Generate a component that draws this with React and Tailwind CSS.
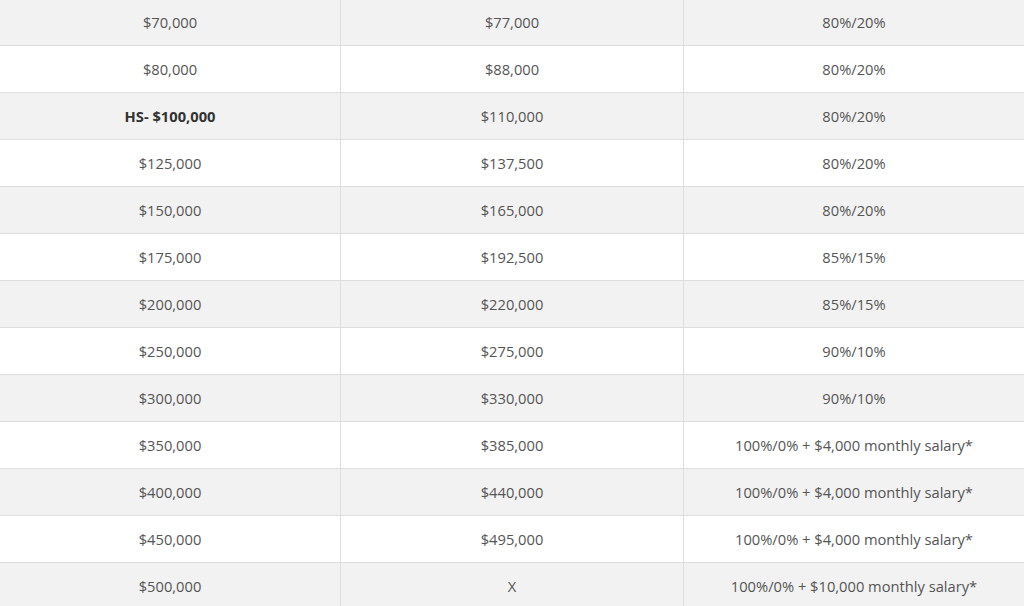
import React from 'react';

const rows = [
    ['$70,000', '$77,000', '80%/20%'],
    ['$80,000', '$88,000', '80%/20%'],
    ['HS- $100,000', '$110,000', '80%/20%', true],
    ['$125,000', '$137,500', '80%/20%'],
    ['$150,000', '$165,000', '80%/20%'],
    ['$175,000', '$192,500', '85%/15%'],
    ['$200,000', '$220,000', '85%/15%'],
    ['$250,000', '$275,000', '90%/10%'],
    ['$300,000', '$330,000', '90%/10%'],
    ['$350,000', '$385,000', '100%/0% + $4,000 monthly salary*'],
    ['$400,000', '$440,000', '100%/0% + $4,000 monthly salary*'],
    ['$450,000', '$495,000', '100%/0% + $4,000 monthly salary*'],
    ['$500,000', 'X', '100%/0% + $10,000 monthly salary*'],
];

const App = () => {
    return (
        <div className="w-[1024px] h-[606px] overflow-hidden bg-white text-[14.7px] text-[#555] font-['Open_Sans',sans-serif]">
            <div className="-mt-[1px]">
                {rows.map(([a, b, c, bold], i) => (
                    <div
                        key={i}
                        className={`grid grid-cols-[341px_343px_1fr] h-[47px] border-b border-[#dddddd] ${i % 2 === 0 ? 'bg-[#f2f2f2]' : 'bg-white'}`}
                    >
                        <div className={`flex items-center justify-center border-r border-[#dddddd] ${bold ? 'font-bold text-[#333]' : ''}`}>{a}</div>
                        <div className="flex items-center justify-center border-r border-[#dddddd]">{b}</div>
                        <div className="flex items-center justify-center">{c}</div>
                    </div>
                ))}
            </div>
        </div>
    );
};

export default App;
